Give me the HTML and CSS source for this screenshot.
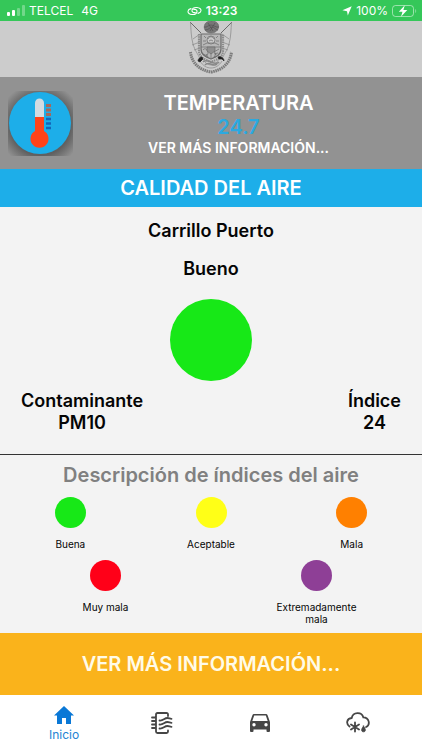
FILE: index.html
```html
<!DOCTYPE html>
<html lang="es">
<head>
<meta charset="utf-8">
<meta name="viewport" content="width=device-width, initial-scale=1">
<title>Calidad del aire</title>
<link rel="stylesheet" href="styles.css">
</head>
<body>
<div class="status">
  <div class="status-side">
    <svg width="18" height="12" viewBox="0 0 18 12" fill="#fff" aria-hidden="true"><rect y="7" width="3" height="4" rx="1"/><rect x="5" y="5" width="3" height="6" rx="1"/><g opacity=".3"><rect x="10" y="3" width="3" height="8" rx="1"/><rect x="15" y="0" width="3" height="11" rx="1"/></g></svg>
    <span>TELCEL</span><span class="network">4G</span>
  </div>
  <div class="status-time">
    <svg width="15" height="10" viewBox="0 0 15 10" fill="none" stroke="#fff" stroke-width="1.1" stroke-linecap="round" aria-hidden="true"><path d="M8.300 6.600C6 7 4.700 5.600 5 4.100 5.400 2.300 7.700 1.300 10 1.500c2.500.2 4.200 1.500 4 3.300-.2 1.500-1.500 2.300-3 2.600"/><path d="M6.700 3.400C9 3 10.300 4.400 10 5.900 9.600 7.700 7.300 8.700 5 8.500 2.500 8.300.8 7 1 5.200c.2-1.500 1.500-2.300 3-2.600"/></svg>
    <span>13:23</span>
  </div>
  <div class="status-side status-end">
    <svg width="10" height="10" viewBox="0 0 10 10" fill="#fff" aria-hidden="true"><path d="M9.700.3 5.800 9.500 5 5.200.4 4.300z"/></svg>
    <span>100%</span>
    <svg width="25" height="12" viewBox="0 0 25 12" aria-hidden="true"><rect x=".5" y=".5" width="21" height="11" rx="3" fill="none" stroke="#fff" opacity=".5"/><path d="M23.300 4c1.200.5 1.200 3.500 0 4z" fill="#fff" opacity=".5"/><path d="M12.800.2 6.800 6.800h3.700L9 11.800l6.300-6.700h-3.900z" fill="#fff"/></svg>
  </div>
</div>

<header class="brand">
  <svg width="44" height="54" viewBox="0 0 44 54" fill="none" stroke="#6a6a6a" stroke-width=".7" role="img" aria-label="Escudo">
    <path d="M1 1 12 12M43 1 32 12" stroke-width="1"/>
    <path d="M1.500 1C2 8 2 16 4 23s5 10 7 15M42.500 1C42 8 42 16 40 23s-5 10-7 15M4 18l7-5M3 24l8-3M5 29l6-2M40 18l-7-5M41 24l-8-3M39 29l-6-2" stroke="#858585"/>
    <path d="M16 3c2-4 11-4 13 0 2 4-1 9-7 9s-8-5-6-9z" fill="#777"/>
    <path d="M15 6c3 1 4-2 7-2s5 3 8 2M16 9c4 0 5-3 7-3s4 3 6 3M19 2l5 8M26 2l-5 8" stroke="#505050"/>
    <path d="M12 13h20v15c0 6-5 8-10 10-5-2-10-4-10-10z" fill="#b8b8b8" stroke-width="1.200"/>
    <path d="M10 13v17c0 6 7 9 12 11 5-2 12-5 12-11V13" stroke-width="2.200" stroke-dasharray="1.500 .7" stroke="#8b8b8b"/>
    <path d="M12 26h20M22 26v11"/>
    <circle cx="22" cy="19" r="4" fill="#c9c9c9"/><path d="M19 18c1-3 5-3 6 0M20 20l2-1 2 1M14 24l4-2h8l4 2M15 15l2 2m12-2-2 2M14 20h3m10 0h3"/>
    <path d="M14 29c2-3 5 0 5 3s-3 3-4 1M25 31l5-3m-5 5 4-1m-5-4 3 6M17 33l2 3m8-3-2 3" stroke="#666"/>
    <path d="M18 26h8v4l-4 3-4-3z" fill="#8f8f8f"/>
    <path d="M1.500 31c1 10 8 18 20.500 20 12.500-2 19.500-10 20.500-20" stroke="#7c7c7c" stroke-width="3" stroke-dasharray="1.600 .6"/>
    <path d="M11 40c3 5 7 7 11 7s8-2 11-7M14 38c2 4 5 6 8 6s6-2 8-6" stroke="#888"/>
    <path d="M14 41c4-5 12 5 16 0M16 44c4-5 8 3 12-1" stroke="#888" stroke-width="1.500"/>
    <path d="M9 40c0-2 2-4 4-4l1 2-3 3zM29 36c3-1 6 1 6 4l-2-2h-3z" fill="#222" stroke="#222"/>
  </svg>
</header>

<main>
  <section class="temp">
    <svg class="temp-icon" width="65" height="65" viewBox="0 0 65 65" aria-hidden="true">
      <defs><radialGradient id="shade" cx=".5" cy=".53" r=".66"><stop offset=".7" stop-color="#606060"/><stop offset="1" stop-color="#929292"/></radialGradient></defs>
      <rect width="65" height="65" fill="url(#shade)"/>
      <circle cx="32" cy="32" r="31" fill="#1daee9"/>
      <path d="M27 27V12a4.500 4.500 0 0 1 9 0v15z" fill="#d3dbe1"/>
      <path d="M27 26h9v14a9 9 0 1 1-9 0z" fill="#ff4319"/>
      <path d="M38 14.500h5M38 19h5M38 23.500h5" stroke="#a5685c" stroke-width="3"/>
      <path d="M38 28h5M38 32.500h5M38 37h5" stroke="#1465b8" stroke-width="2.500"/>
    </svg>
    <div class="temp-text">
      <h2>TEMPERATURA</h2>
      <p class="temp-value">24.7</p>
      <a href="#temperatura">VER MÁS INFORMACIÓN...</a>
    </div>
  </section>

  <h1 class="air-title">CALIDAD DEL AIRE</h1>

  <section class="reading">
    <p>Carrillo Puerto</p>
    <p class="quality">Bueno</p>
    <div class="dial"></div>
    <div class="facts">
      <p>Contaminante<br>PM10</p>
      <p>Índice<br>24</p>
    </div>
  </section>

  <section class="legend">
    <h2>Descripción de índices del aire</h2>
    <ul class="levels">
      <li><span class="dot good"></span>Buena</li>
      <li><span class="dot fair"></span>Aceptable</li>
      <li><span class="dot bad"></span>Mala</li>
    </ul>
    <ul class="levels">
      <li><span class="dot worse"></span>Muy mala</li>
      <li><span class="dot extreme"></span><span class="wrap">Extremadamente mala</span></li>
    </ul>
  </section>

  <a class="more" href="#informacion">VER MÁS INFORMACIÓN...</a>
</main>

<nav class="tabs">
  <a class="active" href="#inicio">
    <svg width="20" height="18" viewBox="0 0 20 18" fill="#0a78d6" aria-hidden="true"><path d="M10 0 20 9.500h-3V18h-5v-6H8v6H3V9.500H0z"/></svg>
    <span>Inicio</span>
  </a>
  <a href="#aire" aria-label="Aire">
    <svg width="22" height="22" viewBox="0 0 22 22" fill="none" stroke="#464646" stroke-width="1.800" stroke-linecap="round" stroke-linejoin="round" aria-hidden="true"><path d="M17 4V2.500Q17 1 15.500 1H6.500Q5 1 5 2.500v17Q5 21 6.500 21h9q1.500 0 1.500-1.500v-1M1 5.500h3M1 9h3M1 12.500h3M1 16h3M8.500 8.500c4 .5 4.500-2.500 8-2.500 2 0 2 .8 4 .8M8.500 12.500c4 .5 4.500-2.500 8-2.500 2 0 2 .8 4 .8M8.500 16.500c4 .5 4.500-2.500 8-2.500 2 0 2 .8 4 .8"/></svg>
  </a>
  <a href="#vehiculos" aria-label="Vehículos">
    <svg width="20" height="18" viewBox="0 0 20 18" fill="#464646" aria-hidden="true"><path fill-rule="evenodd" d="M4 0h12q1.200 0 1.600 1.200L20 8v9q0 1-1 1h-1.500q-1 0-1-1v-1.500h-13V17q0 1-1 1H1q-1 0-1-1V8l2.400-6.800Q2.800 0 4 0zM4.200 1.600 2.300 7h15.400l-1.900-5.400zM4 9a1.700 1.700 0 1 0 0 3.400A1.700 1.700 0 0 0 4 9zm12 0a1.700 1.700 0 1 0 0 3.400A1.700 1.700 0 0 0 16 9z"/></svg>
  </a>
  <a href="#clima" aria-label="Clima">
    <svg width="24" height="21" viewBox="0 0 24 21" fill="none" stroke="#464646" stroke-width="1.800" stroke-linecap="round" aria-hidden="true"><path d="M3.500 14.500C-.2 12 .5 6.500 5.700 6 7-.3 15.800-.3 17.300 5.300c6 .2 7.300 7.500 2.800 9.700M9 10.500v9M5 12.500l8 5M13 12.500l-8 5"/><path d="M17.500 14c-3 4-2 5.800 0 5.800s3-1.800 0-5.800z" fill="#464646" stroke-width=".8"/></svg>
  </a>
</nav>
</body>
</html>
```
FILE: styles.css
```css
* { box-sizing: border-box; }

body {
  margin: 0;
  min-height: 100vh;
  display: flex;
  flex-direction: column;
  background: #f3f3f3;
  color: #050505;
  font-family: Inter, "Liberation Sans", sans-serif;
}

h1, h2, p, ul { margin: 0; padding: 0; }
ul { list-style: none; }
a { color: inherit; text-decoration: none; }
svg { display: block; flex: none; }

.status {
  display: grid;
  grid-template-columns: 1fr auto 1fr;
  align-items: center;
  padding: 0 5px 0 7px;
  background: #35c759;
  color: #fff;
  font-size: 12px;
  line-height: 21px;
}
.status-side { display: flex; align-items: center; gap: 4px; }
.status-end { justify-content: flex-end; }
.network { margin-left: 4px; }
.status-time { display: flex; align-items: center; gap: 4px; font-weight: 600; }

.brand {
  display: flex;
  justify-content: center;
  padding-bottom: 2px;
  background: #ccc;
}

.temp {
  display: flex;
  align-items: center;
  padding: 0 18px 0 8px;
  background: #929292;
  color: #fff;
}
.temp-text {
  flex: 1;
  padding: 14px 0 12px;
  text-align: center;
  font-weight: 600;
}
.temp-text h2, .temp-value {
  font-size: 20px;
  font-weight: 600;
  line-height: 24px;
}
.temp-value { color: #2ba9e0; }
.temp-text a { display: block; font-size: 14px; line-height: 18px; }

.air-title {
  background: #1daee9;
  color: #fff;
  font-size: 20px;
  font-weight: 600;
  line-height: 38px;
  text-align: center;
}

.reading {
  padding: 13px 21px 20px;
  border-bottom: 1px solid #333;
  font-size: 18px;
  font-weight: 600;
  line-height: 22px;
  text-align: center;
}
.quality { margin-top: 16px; }
.dial {
  width: 82px;
  height: 82px;
  margin: 19px auto 9px;
  border-radius: 50%;
  background: #17e817;
}
.facts { display: flex; justify-content: space-between; }

.legend { padding: 8px 0; }
.legend h2 {
  color: #808080;
  font-size: 20px;
  font-weight: 600;
  line-height: 24px;
  text-align: center;
}
.levels {
  display: flex;
  padding-top: 10px;
  font-size: 10px;
  line-height: 12px;
}
.levels li {
  flex: 1;
  display: flex;
  flex-direction: column;
  align-items: center;
  gap: 10px;
  text-align: center;
}
.dot { width: 31px; height: 31px; border-radius: 50%; }
.wrap { max-width: 100px; }
.good { background: #17e817; }
.fair { background: #ffff17; }
.bad { background: #ff8000; }
.worse { background: #ff0018; }
.extreme { background: #8e3f96; }

.more {
  display: block;
  background: #fab31b;
  color: #fffbe8;
  font-size: 20px;
  font-weight: 600;
  line-height: 62px;
  text-align: center;
}

.tabs {
  flex: 1;
  display: flex;
  min-height: 55px;
  padding: 0 15px;
  background: #fff;
}
.tabs a {
  flex: 1;
  display: flex;
  flex-direction: column;
  align-items: center;
  justify-content: center;
}
.tabs .active {
  gap: 3px;
  padding-top: 3px;
  color: #2383d3;
  font-size: 12px;
  line-height: 16px;
}
```
